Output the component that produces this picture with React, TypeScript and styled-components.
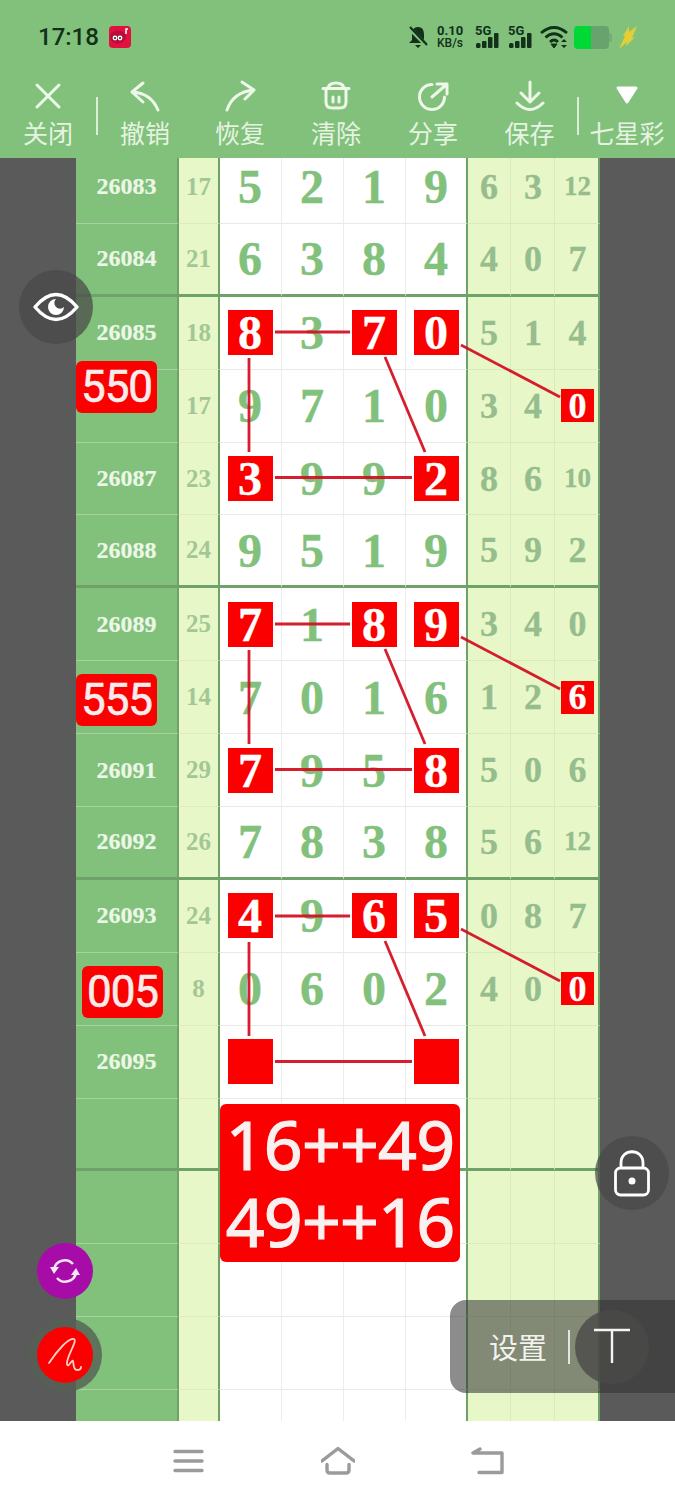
import React from 'react';
import styled, { createGlobalStyle } from 'styled-components';

const GlobalStyle = createGlobalStyle`
  html, body {
    margin: 0;
    padding: 0;
    background: #ffffff;
  }
`;

const GREEN = '#81c17b';
const LINE = '#6fa268';
const PALE = '#e8f7c8';
const RED = '#fb0000';
const CJK = `'Noto Sans CJK SC', 'Noto Sans', sans-serif`;
const SERIF = `'Liberation Serif', serif`;

const Page = styled.div`
  position: relative;
  width: 675px;
  height: 1500px;
  overflow: hidden;
  display: flex;
  flex-direction: column;
`;

const Header = styled.header`
  height: 158px;
  flex: none;
  background: ${GREEN};
`;

const StatusBar = styled.div`
  height: 74px;
  display: flex;
  align-items: center;
  padding: 0 37px 0 38px;
  color: #12301a;
`;

const Time = styled.span`
  font: 500 24px/1 Roboto, sans-serif;
`;

const StatusIcons = styled.div`
  margin-left: auto;
  display: flex;
  align-items: center;
`;

const StatusSvg = styled.svg<{ $gap?: number }>`
  display: block;
  margin-left: ${p => p.$gap ?? 0}px;
`;

const Speed = styled.div`
  width: 26px;
  margin-left: 9px;
  font: 700 13px/12px Roboto, sans-serif;
  white-space: nowrap;

  small {
    display: block;
    font-size: 12px;
    line-height: 12px;
    font-weight: 500;
  }
`;

const Signal = styled.div<{ $gap: number }>`
  position: relative;
  width: 25px;
  height: 24px;
  margin-left: ${p => p.$gap}px;
`;

const SignalType = styled.span`
  position: absolute;
  left: 0;
  top: -1px;
  font: 700 13px/13px Roboto, sans-serif;
`;

const Battery = styled.div`
  position: relative;
  width: 35px;
  height: 23px;
  margin-left: 6px;
  margin-right: 4px;
  border-radius: 4px;
  background: linear-gradient(to right, #00d935 0 48%, #68a36e 48% 100%);

  &::after {
    content: '';
    position: absolute;
    right: -3px;
    top: 7px;
    width: 3px;
    height: 9px;
    border-radius: 0 2px 2px 0;
    background: #74ad78;
  }
`;

const Toolbar = styled.nav`
  height: 84px;
  display: grid;
  grid-template-columns: 96px 2px 94px 96px 96px 98px 95px 2px 96px;
  padding-top: 6px;
  box-sizing: border-box;
`;

const ToolButton = styled.div`
  display: flex;
  flex-direction: column;
  align-items: center;
`;

const ToolIcon = styled.svg`
  display: block;
  width: 34px;
  height: 32px;
  fill: none;
  stroke: #edf7ea;
  stroke-width: 3;
  stroke-linecap: round;
  stroke-linejoin: round;
`;

const ToolLabel = styled.span`
  margin-top: 3px;
  font: 400 25px/34px ${CJK};
  color: #e6f3e2;
  white-space: nowrap;
`;

const ToolDivider = styled.div`
  width: 2px;
  height: 38px;
  margin-top: 17px;
  background: #dceed8;
`;

const Main = styled.main`
  position: relative;
  height: 1263px;
  flex: none;
  overflow: hidden;
  background: #5a5a5a;
  padding: 0 75px 0 76px;
`;

const Table = styled.div`
  display: grid;
  grid-template-columns: 103px 41px repeat(4, 62px) 43px 44px 45px;
  grid-auto-rows: 72.9px;
  margin-top: -7px;
`;

const Cell = styled.div<{ $thick?: boolean; $edge?: boolean }>`
  box-sizing: border-box;
  display: flex;
  align-items: center;
  justify-content: center;
  font-family: ${SERIF};
  font-weight: 700;
  border-bottom: ${p => (p.$thick ? `3px solid ${LINE}` : '1px solid var(--row-line)')};
  border-right: ${p => (p.$edge ? `2px solid ${LINE}` : '1px solid var(--col-line)')};
`;

const IssueCell = styled(Cell)`
  --row-line: #a7d3a2;
  --col-line: ${LINE};
  background: ${GREEN};
  color: #ecf7e7;
  font-size: 24px;
  -webkit-text-stroke: 0.2px currentColor;
`;

const SumCell = styled(Cell)`
  --row-line: #dcecc0;
  --col-line: ${LINE};
  background: ${PALE};
  color: #a2c795;
  font-size: 25px;
`;

const DigitCell = styled(Cell)`
  --row-line: #e9e9e9;
  --col-line: #ececec;
  background: #ffffff;
  color: ${GREEN};
  font-size: 48px;
  padding-right: ${p => (p.$edge ? 0 : 1)}px;
  -webkit-text-stroke: 0.4px currentColor;
`;

const SideCell = styled(Cell)<{ $shift?: number }>`
  --row-line: #d9ebbc;
  --col-line: #d9ebbc;
  background: ${PALE};
  color: #96bd8d;
  font-size: 36px;
  padding-left: ${p => p.$shift ?? 0}px;
  -webkit-text-stroke: 0.3px currentColor;
`;

const SmallValue = styled.span`
  font-size: 27px;
`;

const Mark = styled.span<{ $small?: boolean }>`
  display: flex;
  align-items: center;
  justify-content: center;
  width: ${p => (p.$small ? 33 : 45)}px;
  height: ${p => (p.$small ? 33 : 45)}px;
  background: ${RED};
  color: #ffffff;
`;

const Overlay = styled.svg`
  position: absolute;
  left: 0;
  top: 0;
  fill: none;
  stroke: #d40e20;
  stroke-width: 2.8;
  opacity: 0.93;
  pointer-events: none;
`;

const Badge = styled.div<{ $left: number; $top: number }>`
  position: absolute;
  left: ${p => p.$left}px;
  top: ${p => p.$top}px;
  width: 81px;
  height: 52px;
  border-radius: 6px;
  background: ${RED};
  color: #f7ecec;
  font: 400 44px/52px Roboto, sans-serif;
  letter-spacing: -1px;
  text-align: center;
  -webkit-text-stroke: 0.6px currentColor;
`;

const ResultBox = styled.div`
  position: absolute;
  left: 220px;
  top: 1104px;
  width: 240px;
  height: 158px;
  border-radius: 6px;
  background: ${RED};
  color: #f9f0f0;
  font: 400 68px/77px 'Noto Sans', sans-serif;
  text-align: center;
  padding-top: 1px;
  box-sizing: border-box;
  letter-spacing: -0.8px;
  -webkit-text-stroke: 1.2px currentColor;
`;

const RoundButton = styled.div<{ $x: number; $y: number; $r: number; $bg: string }>`
  position: absolute;
  left: ${p => p.$x - p.$r}px;
  top: ${p => p.$y - p.$r}px;
  width: ${p => p.$r * 2}px;
  height: ${p => p.$r * 2}px;
  border-radius: 50%;
  background: ${p => p.$bg};
  display: flex;
  align-items: center;
  justify-content: center;
`;

const SettingsPanel = styled.div`
  position: absolute;
  left: 450px;
  right: 0;
  top: 1300px;
  height: 93px;
  border-radius: 16px 0 0 16px;
  background: rgba(50, 50, 50, 0.56);
  display: flex;
  align-items: center;
  padding-left: 39px;
  box-sizing: border-box;
`;

const SettingsLabel = styled.span`
  font: 400 29px/1 ${CJK};
  color: #f2f2ee;
`;

const SettingsDivider = styled.div`
  width: 2px;
  height: 34px;
  margin-left: 21px;
  background: #e4e4e0;
`;

const BottomNav = styled.footer`
  height: 79px;
  flex: none;
  background: #ffffff;
  display: flex;
  align-items: center;
  justify-content: center;
  gap: 116px;
`;

const NavIcon = styled.svg`
  display: block;
  width: 34px;
  height: 34px;
  fill: none;
  stroke: #9b9b9b;
  stroke-width: 3.4;
  stroke-linecap: round;
  stroke-linejoin: round;
`;

type RowData = {
  issue: string;
  sum: string;
  digits: string[];
  marks?: number[];
  side: string[];
  sideMark?: boolean;
};

const blank = ['', '', '', ''];

const rows: RowData[] = [
  { issue: '26083', sum: '17', digits: ['5', '2', '1', '9'], side: ['6', '3', '12'] },
  { issue: '26084', sum: '21', digits: ['6', '3', '8', '4'], side: ['4', '0', '7'] },
  { issue: '26085', sum: '18', digits: ['8', '3', '7', '0'], marks: [0, 2, 3], side: ['5', '1', '4'] },
  { issue: '', sum: '17', digits: ['9', '7', '1', '0'], side: ['3', '4', '0'], sideMark: true },
  { issue: '26087', sum: '23', digits: ['3', '9', '9', '2'], marks: [0, 3], side: ['8', '6', '10'] },
  { issue: '26088', sum: '24', digits: ['9', '5', '1', '9'], side: ['5', '9', '2'] },
  { issue: '26089', sum: '25', digits: ['7', '1', '8', '9'], marks: [0, 2, 3], side: ['3', '4', '0'] },
  { issue: '', sum: '14', digits: ['7', '0', '1', '6'], side: ['1', '2', '6'], sideMark: true },
  { issue: '26091', sum: '29', digits: ['7', '9', '5', '8'], marks: [0, 3], side: ['5', '0', '6'] },
  { issue: '26092', sum: '26', digits: ['7', '8', '3', '8'], side: ['5', '6', '12'] },
  { issue: '26093', sum: '24', digits: ['4', '9', '6', '5'], marks: [0, 2, 3], side: ['0', '8', '7'] },
  { issue: '', sum: '8', digits: ['0', '6', '0', '2'], side: ['4', '0', '0'], sideMark: true },
  { issue: '26095', sum: '', digits: blank, marks: [0, 3], side: ['', '', ''] },
  { issue: '', sum: '', digits: blank, side: ['', '', ''] },
  { issue: '', sum: '', digits: blank, side: ['', '', ''] },
  { issue: '', sum: '', digits: blank, side: ['', '', ''] },
  { issue: '', sum: '', digits: blank, side: ['', '', ''] },
  { issue: '', sum: '', digits: blank, side: ['', '', ''] },
];

const tools: { label: string; icon: React.ReactNode; divider?: boolean }[] = [
  { label: '关闭', divider: true, icon: <path d="M6 5 L28 27 M28 5 L6 27" /> },
  { label: '撤销', icon: <path d="M15 3 L4 12 L15 22 M4 12 Q23 13 30 30" /> },
  { label: '恢复', icon: <path d="M19 2 L31 10 L22 19 M31 10 Q10 12 4 30" /> },
  {
    label: '清除',
    icon: (
      <>
        <path d="M9 8 Q10 3 17 3 Q24 3 25 8" />
        <path d="M4 8.500 H30" />
        <path d="M7 9 V22 Q7 28 13 28 H21 Q27 28 27 22 V9" />
        <path d="M14 17 V22 M20 17 V22" />
      </>
    ),
  },
  {
    label: '分享',
    icon: <path d="M16 4.5 A12.5 12.5 0 1 0 28.5 17 M16 17 L31 4 M21 4 H31 V14" />,
  },
  { label: '保存', divider: true, icon: <path d="M17 2 V22 M8 13 L17 22 L26 13 M4 23 Q17 36 30 23" /> },
  {
    label: '七星彩',
    icon: <path d="M8 8 H26 L17 22 Z" fill="#ffffff" stroke="#ffffff" />,
  },
];

const groupOffsets = [0, 292, 584];

const StatusBarIcons: React.FC = () => (
  <StatusIcons>
    <StatusSvg width="20" height="24" viewBox="0 0 20 24">
      <path d="M10 2 C5 2 4 6 4 10 V15 L1 18 H19 L16 15 V10 C16 6 15 2 10 2 Z M7 20 H13 L10 23 Z" fill="#12301a" />
      <path d="M1 3 L19 21" stroke={GREEN} strokeWidth="4" />
      <path d="M2 2 L19 20" stroke="#12301a" strokeWidth="2" />
    </StatusSvg>
    <Speed>
      0.10
      <small>KB/s</small>
    </Speed>
    {[12, 8].map((gap, i) => (
      <Signal key={i} $gap={gap}>
        <SignalType>5G</SignalType>
        <svg width="25" height="24" viewBox="0 0 25 24">
          <rect x="1" y="18" width="4.500" height="5" rx="1.500" fill="#12301a" />
          <rect x="7" y="16" width="4.500" height="7" rx="1" fill="#12301a" />
          <rect x="13" y="12" width="4.500" height="11" rx="1" fill="#12301a" />
          <rect x="19" y="8" width="4.500" height="15" rx="1" fill="#12301a" />
        </svg>
      </Signal>
    ))}
    <StatusSvg $gap={7} width="28" height="24" viewBox="0 0 28 24" fill="none" stroke="#12301a" strokeWidth="2.8">
      <path d="M1 8 Q14 -3 27 8" />
      <path d="M5.5 12.5 Q14 5 22.5 12.5" />
      <path d="M10 17 Q14 13 18 17" />
      <path d="M11 19 H17 L14 23 Z" fill="#12301a" strokeWidth="1" />
      <path d="M21 17 L24 14 L27 17 Z M21 20 H27 L24 23 Z" fill="#12301a" strokeWidth="0" />
    </StatusSvg>
    <Battery />
    <StatusSvg $gap={5} width="20" height="24" viewBox="0 0 20 24">
      <path d="M1 24 L7 11 L5 11 L11 1 L11 7 L19 1 L14 13 L17 12 L8 21 L9 17 Z" fill="#e2cf35" />
    </StatusSvg>
  </StatusIcons>
);

const App: React.FC = () => (
  <Page>
    <GlobalStyle />
    <Header>
      <StatusBar>
        <Time>17:18</Time>
        <StatusSvg $gap={10} width="22" height="22" viewBox="0 0 22 22">
          <rect x="0" y="0" width="22" height="22" rx="4" fill="#e0103f" />
          <ellipse cx="9" cy="11" rx="8" ry="6.500" fill="#b80d38" />
          <circle cx="6" cy="12" r="2.400" fill="#ffffff" />
          <circle cx="11" cy="12" r="2.400" fill="#ffffff" />
          <circle cx="6" cy="12" r="1" fill="#222222" />
          <circle cx="11" cy="12" r="1" fill="#222222" />
          <path d="M17 8 V3 L19 3" stroke="#ffffff" strokeWidth="1.500" fill="none" />
        </StatusSvg>
        <StatusBarIcons />
      </StatusBar>
      <Toolbar>
        {tools.map(tool => (
          <React.Fragment key={tool.label}>
            <ToolButton>
              <ToolIcon viewBox="0 0 34 32">{tool.icon}</ToolIcon>
              <ToolLabel>{tool.label}</ToolLabel>
            </ToolButton>
            {tool.divider && <ToolDivider />}
          </React.Fragment>
        ))}
      </Toolbar>
    </Header>

    <Main>
      <Table>
        {rows.map((row, r) => {
          const thick = r % 4 === 1;
          return (
            <React.Fragment key={r}>
              <IssueCell $thick={thick} $edge>{row.issue}</IssueCell>
              <SumCell $thick={thick} $edge>{row.sum}</SumCell>
              {row.digits.map((digit, c) => (
                <DigitCell key={c} $thick={thick} $edge={c === 3}>
                  {row.marks?.includes(c) ? <Mark>{digit}</Mark> : digit}
                </DigitCell>
              ))}
              {row.side.map((value, c) => (
                <SideCell key={c} $thick={thick} $edge={c === 2} $shift={c === 0 ? 0 : c}>
                  {c === 2 && row.sideMark ? (
                    <Mark $small>{value}</Mark>
                  ) : value.length > 1 ? (
                    <SmallValue>{value}</SmallValue>
                  ) : (
                    value
                  )}
                </SideCell>
              ))}
            </React.Fragment>
          );
        })}
      </Table>
      <Overlay width="675" height="1263" viewBox="0 158 675 1263">
        {groupOffsets.map(dy => (
          <g key={dy} transform={`translate(0 ${dy})`}>
            <path d="M275 332 H350" />
            <path d="M249 358 V452" />
            <path d="M275 477.500 H412" />
            <path d="M385 357 L425 452" />
            <path d="M461 345 L560 397" />
          </g>
        ))}
      </Overlay>
    </Main>

    <Badge $left={76} $top={361}>550</Badge>
    <Badge $left={76} $top={674}>555</Badge>
    <Badge $left={82} $top={966}>005</Badge>

    <ResultBox>
      16++49
      <br />
      49++16
    </ResultBox>

    <RoundButton $x={56} $y={307} $r={37} $bg="rgba(72, 72, 72, 0.72)">
      <svg width="46" height="34" viewBox="0 0 46 34" fill="none">
        <path d="M2 17 Q23 -8 44 17 Q23 42 2 17 Z" stroke="#ffffff" strokeWidth="3.4" strokeLinejoin="round" />
        <path d="M23 9 A8 8 0 1 0 31 17 A5 5 0 0 1 23 9 Z" fill="#ffffff" />
      </svg>
    </RoundButton>

    <RoundButton $x={632} $y={1173} $r={37} $bg="rgba(72, 72, 72, 0.72)">
      <svg width="38" height="48" viewBox="0 0 38 48" fill="none" stroke="#ffffff" strokeWidth="2.8">
        <path d="M8 19 V14 C8 -1 30 -1 30 14 V19" />
        <rect x="2.500" y="19" width="33" height="27" rx="5" />
        <circle cx="19" cy="32" r="3.500" fill="#ffffff" stroke="none" />
      </svg>
    </RoundButton>

    <RoundButton $x={65} $y={1271} $r={28} $bg="#a70ba8">
      <svg width="32" height="32" viewBox="0 0 32 32" fill="none" stroke="#f6e6f6" strokeWidth="2.6">
        <path d="M5 14 A11 11 0 0 1 24 9" />
        <path d="M27 18 A11 11 0 0 1 8 23" />
        <path d="M1 12 L10 12 L5 19 Z M31 20 L22 20 L27 13 Z" fill="#f6e6f6" stroke="none" />
      </svg>
    </RoundButton>

    <RoundButton $x={65} $y={1355} $r={37} $bg="rgba(85, 95, 85, 0.8)">
      <RoundButton $x={37} $y={37} $r={28} $bg={RED}>
        <svg width="36" height="36" viewBox="0 0 36 36" fill="none" stroke="#ffd0c6" strokeWidth="1.800" strokeLinecap="round">
          <path d="M2 26 C10 14 22 0 27 2 C31 4 19 20 20 27 C21 32 25 22 26 24 C27 28 26 33 30 33 C32 33 34 32 34 30" />
        </svg>
      </RoundButton>
    </RoundButton>

    <SettingsPanel>
      <SettingsLabel>设置</SettingsLabel>
      <SettingsDivider />
    </SettingsPanel>
    <RoundButton $x={612} $y={1347} $r={37} $bg="rgba(74, 74, 72, 0.8)">
      <svg width="38" height="38" viewBox="0 0 38 38" fill="none" stroke="#f4f4f2" strokeWidth="2.4">
        <path d="M1 2 H37 M19 2 V35" />
      </svg>
    </RoundButton>

    <BottomNav>
      <NavIcon viewBox="0 0 34 34">
        <path d="M4 7.500 H31 M4 17 H31 M4 26.500 H31" />
      </NavIcon>
      <NavIcon viewBox="0 0 34 34">
        <path d="M1 17 L17 4.500 L33 17 M6 20.500 V26 Q6 29 9 29 H25 Q28 29 28 26 V20.500" />
      </NavIcon>
      <NavIcon viewBox="0 0 34 34">
        <path d="M2 9 L9 5 M3 9 H31 V28.500 H8" />
      </NavIcon>
    </BottomNav>
  </Page>
);

export default App;
